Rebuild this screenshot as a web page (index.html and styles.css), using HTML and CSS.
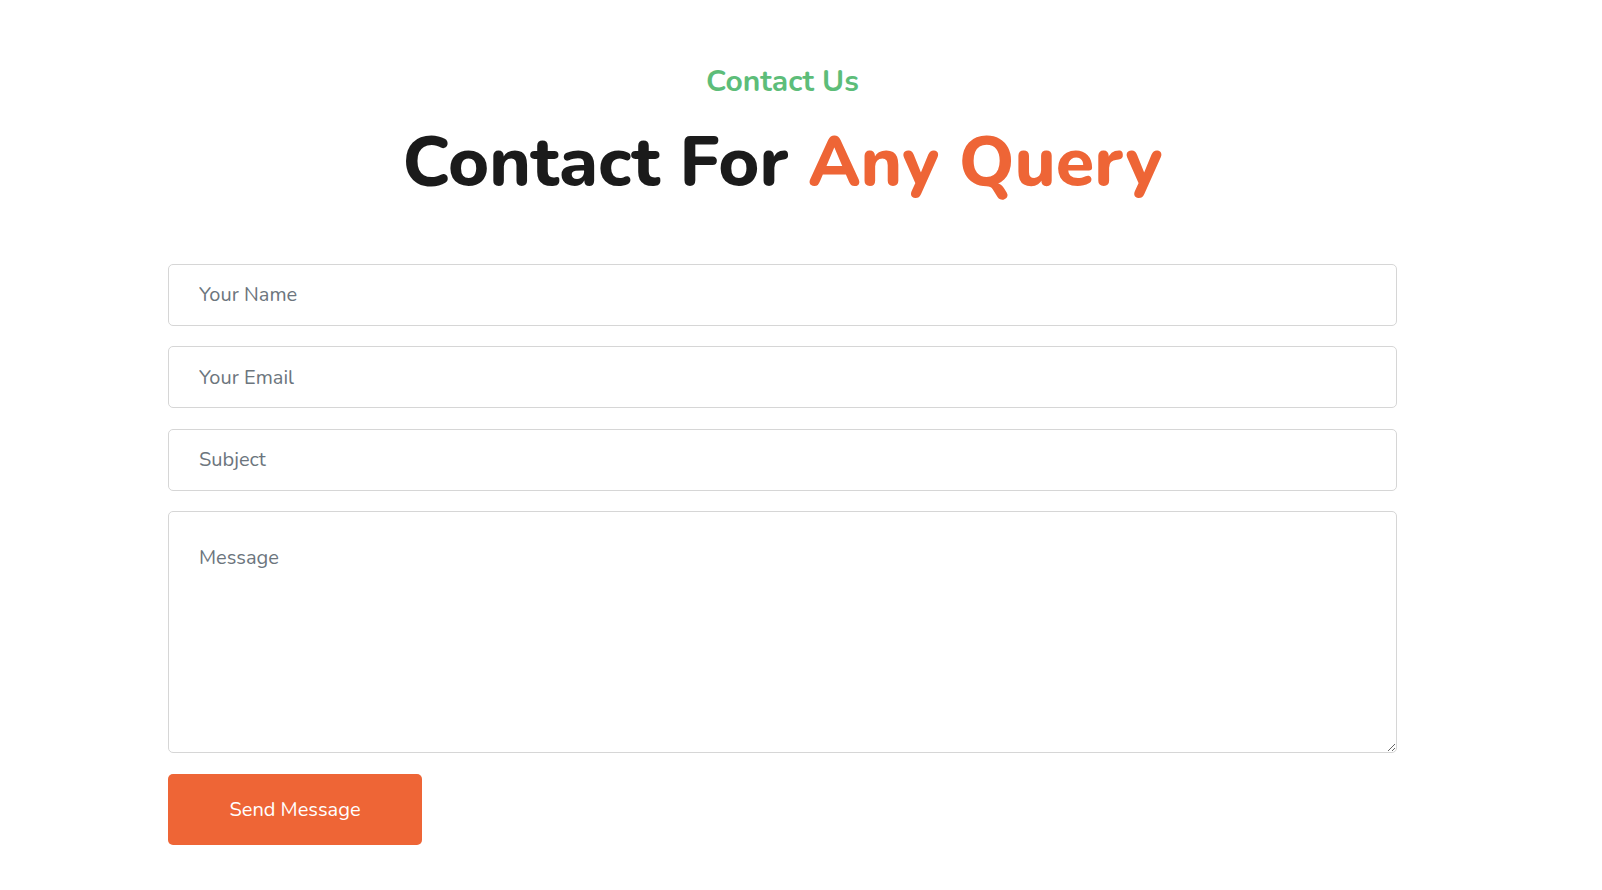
FILE: index.html
```html
<!DOCTYPE html>
<html lang="en">
<head>
<meta charset="utf-8">
<title>Contact</title>
<link rel="stylesheet" href="styles.css">
</head>
<body>
<div class="page">
  <section class="contact">
    <div class="heading">
      <h5 class="eyebrow">Contact Us</h5>
      <h1 class="title">Contact For <span class="accent">Any Query</span></h1>
    </div>
    <form class="form">
      <input class="field" type="text" placeholder="Your Name">
      <input class="field" type="email" placeholder="Your Email">
      <input class="field" type="text" placeholder="Subject">
      <textarea class="field area" placeholder="Message"></textarea>
      <div class="actions">
        <button class="btn" type="button">Send Message</button>
      </div>
    </form>
  </section>
</div>
</body>
</html>
```
FILE: styles.css
```css
* { box-sizing: border-box; }
html, body { margin: 0; padding: 0; background: #fff; }
body { font-family: "Nunito", "Lato", "Open Sans", sans-serif; }
.page { width: 1565px; }
.contact { width: 1229px; margin: 0 auto; padding-top: 64px; }
.heading { text-align: center; }
.eyebrow {
  margin: 0;
  font-size: 30px;
  line-height: 36px;
  font-weight: 700;
  color: #5dbd79;
}
.title {
  margin: 19.5px 0 0;
  font-size: 70px;
  line-height: 84px;
  font-weight: 800;
  color: #1b1b1b;
}
.accent { color: #ee6536; }
.form {
  margin-top: 60px;
  display: flex;
  flex-direction: column;
  gap: 20.5px;
}
.field {
  display: block;
  width: 100%;
  height: 62px;
  padding: 0 30px;
  border: 1px solid #d6d6d6;
  border-radius: 5px;
  font-family: inherit;
  font-size: 20px;
  color: #555;
  background: #fff;
  outline: none;
}
.field::placeholder { color: #6c757d; }
.area {
  height: 242px;
  padding: 31px 30px;
  line-height: 30px;
  resize: vertical;
}
.actions { display: flex; }
.btn {
  width: 254px;
  height: 71px;
  border: 0;
  border-radius: 5px;
  background: #ee6536;
  color: #fff;
  font-family: inherit;
  font-size: 20px;
  cursor: pointer;
}
```
